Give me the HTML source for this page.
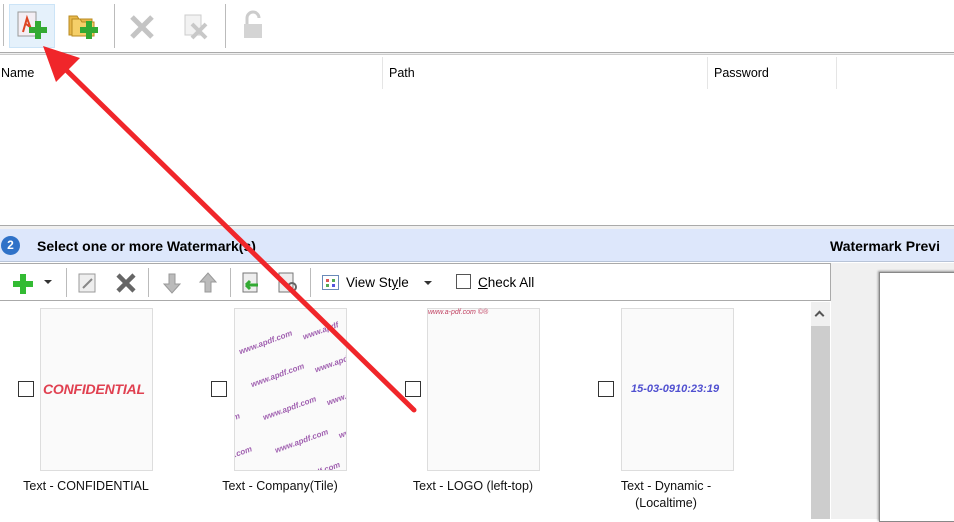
<!DOCTYPE html>
<html><head><meta charset="utf-8"><style>
*{margin:0;padding:0;box-sizing:border-box}
body{width:954px;height:519px;overflow:hidden;background:#fff;font-family:"Liberation Sans","DejaVu Sans",sans-serif;font-size:12.5px;color:#000;position:relative}
.a{position:absolute}
.sep{position:absolute;width:1px;background:#bbb}
.thumb{position:absolute;top:308px;width:113px;height:163px;border:1px solid #ddd;background:#fafafa}
.cb{position:absolute;top:381px;width:16px;height:16px;border:1px solid #333;background:#fff}
.lbl{position:absolute;top:478px;width:200px;text-align:center;font-size:12.5px;line-height:17px;color:#111}
</style></head><body>
<div class="a" style="left:0;top:0;width:954px;height:52px;background:#fff"></div>
<div class="sep" style="left:3px;top:4px;height:42px"></div>
<div class="a" style="left:9px;top:4px;width:46px;height:44px;background:#e5f1fb;border:1px solid #cce4f7"></div>
<svg class="a" style="left:17px;top:10px" width="32" height="32"><rect x="1" y="2" width="18" height="24" fill="#f4eef4" stroke="#999"/><path d="M6 22 L10 8 L15 22 M9 14 L13 17" stroke="#d42" stroke-width="2" fill="none"/><rect x="18" y="11" width="6" height="18" fill="#3a3"/><rect x="12" y="17" width="18" height="6" fill="#3a3"/></svg>
<svg class="a" style="left:68px;top:10px" width="32" height="32"><path d="M1 6h8l2 3h13v16H1z" fill="#e8b84a" stroke="#b88a20"/><path d="M4 9h8l2 3h12v14H4z" fill="#f5cf68" stroke="#b88a20"/><rect x="18" y="11" width="6" height="18" fill="#3a3"/><rect x="12" y="17" width="18" height="6" fill="#3a3"/></svg>
<div class="sep" style="left:114px;top:4px;height:44px"></div>
<svg class="a" style="left:128px;top:14px" width="28" height="26"><path d="M4 3L24 23M24 3L4 23" stroke="#c4c4c4" stroke-width="5"/></svg>
<svg class="a" style="left:182px;top:12px" width="30" height="30"><rect x="3" y="3" width="16" height="20" fill="#f2f2f2" stroke="#ccc"/><path d="M10 12L24 26M24 12L10 26" stroke="#c8c8c8" stroke-width="4"/></svg>
<div class="sep" style="left:225px;top:4px;height:44px"></div>
<svg class="a" style="left:242px;top:10px" width="24" height="30"><path d="M5 14V8a6 6 0 0 1 12 0" stroke="#ccc" stroke-width="3" fill="none"/><rect x="2" y="14" width="18" height="14" fill="#d4d4d4"/></svg>
<div class="a" style="left:0;top:52px;width:954px;height:3px;border-top:1px solid #aaa;border-bottom:1px solid #ccc;background:#eee"></div>
<div class="a" style="left:1px;top:66px">Name</div>
<div class="sep" style="left:382px;top:57px;height:32px;background:#e5e5e5"></div>
<div class="a" style="left:389px;top:66px">Path</div>
<div class="sep" style="left:707px;top:57px;height:32px;background:#e5e5e5"></div>
<div class="a" style="left:714px;top:66px">Password</div>
<div class="sep" style="left:836px;top:57px;height:32px;background:#e5e5e5"></div>
<div class="a" style="left:0;top:225px;width:954px;height:4px;border-top:1px solid #aaa;background:#f0f0f0"></div>
<div class="a" style="left:0;top:229px;width:954px;height:33px;background:#dde7fb;border-bottom:1px solid #b8c4d8"></div>
<div class="a" style="left:1px;top:236px;width:19px;height:19px;border-radius:50%;background:#2f72c8;color:#fff;font-weight:bold;font-size:12px;text-align:center;line-height:19px">2</div>
<div class="a" style="left:37px;top:238px;font-weight:bold;font-size:14px">Select one or more Watermark(s)</div>
<div class="a" style="left:830px;top:238px;font-weight:bold;font-size:14px;white-space:nowrap">Watermark Previ</div>
<div class="a" style="left:831px;top:263px;width:123px;height:256px;background:#f0f0f0"></div>
<div class="a" style="left:879px;top:272px;width:80px;height:250px;background:#fff;border:1px solid #888;box-shadow:-1px -1px 2px #999"></div>
<div class="a" style="left:0;top:263px;width:831px;height:38px;background:#fff;border:1px solid #aaa;border-left:none"></div>
<svg class="a" style="left:12px;top:273px" width="22" height="22"><rect x="8" y="1" width="6" height="20" fill="#3b3"/><rect x="1" y="8" width="20" height="6" fill="#3b3"/></svg>
<div class="a" style="left:44px;top:280px;border:4px solid transparent;border-top:4px solid #333"></div>
<div class="sep" style="left:66px;top:268px;height:29px"></div>
<svg class="a" style="left:77px;top:272px" width="22" height="22"><rect x="2" y="2" width="16" height="18" fill="#eee" stroke="#999"/><path d="M6 16L15 7" stroke="#888" stroke-width="2"/></svg>
<svg class="a" style="left:115px;top:272px" width="22" height="22"><path d="M3 3L19 19M19 3L3 19" stroke="#666" stroke-width="4.5"/></svg>
<div class="sep" style="left:148px;top:268px;height:29px"></div>
<svg class="a" style="left:162px;top:272px" width="20" height="22"><path d="M7 2h6v10h5l-8 9-8-9h5z" fill="#bbb" stroke="#999"/></svg>
<svg class="a" style="left:198px;top:272px" width="20" height="22"><path d="M7 20h6V10h5L10 1 2 10h5z" fill="#bbb" stroke="#999"/></svg>
<div class="sep" style="left:230px;top:268px;height:29px"></div>
<svg class="a" style="left:240px;top:271px" width="24" height="24"><rect x="3" y="2" width="14" height="19" fill="#eee" stroke="#777"/><path d="M6 14h12M6 14l4-4M6 14l4 4" stroke="#3a3" stroke-width="3"/></svg>
<svg class="a" style="left:276px;top:271px" width="24" height="24"><rect x="3" y="2" width="14" height="19" fill="#eee" stroke="#777"/><circle cx="16" cy="16" r="4" fill="none" stroke="#666" stroke-width="2"/></svg>
<div class="sep" style="left:310px;top:268px;height:29px"></div>
<div class="a" style="left:322px;top:275px;width:17px;height:15px;border:1px solid #6a8ab8;background:#fff"></div>
<div class="a" style="left:326px;top:279px;width:3px;height:3px;background:#d55"></div><div class="a" style="left:332px;top:279px;width:3px;height:3px;background:#5a5"></div>
<div class="a" style="left:326px;top:284px;width:3px;height:3px;background:#5a5"></div><div class="a" style="left:332px;top:284px;width:3px;height:3px;background:#55d"></div>
<div class="a" style="left:346px;top:275px;font-size:13.5px">View St<u>y</u>le</div>
<div class="a" style="left:424px;top:281px;border:4px solid transparent;border-top:4px solid #333"></div>
<div class="a" style="left:456px;top:274px;width:15px;height:15px;border:1px solid #555;background:#fff"></div>
<div class="a" style="left:478px;top:275px;font-size:13.5px"><u>C</u>heck All</div>
<div class="a" style="left:811px;top:302px;width:19px;height:217px;background:#f0f0f0"></div>
<div class="a" style="left:816px;top:312px;width:7px;height:7px;border-left:2px solid #555;border-top:2px solid #555;transform:rotate(45deg)"></div>
<div class="a" style="left:811px;top:326px;width:19px;height:193px;background:#cdcdcd"></div>
<div class="cb" style="left:18px"></div>
<div class="thumb" style="left:40px"><div class="a" style="left:2px;top:72px;color:#e04050;font-weight:bold;font-style:italic;font-size:14px;letter-spacing:-0.2px">CONFIDENTIAL</div></div>
<div class="lbl" style="left:-14px">Text - CONFIDENTIAL</div>
<div class="cb" style="left:211px"></div>
<div class="thumb" style="left:234px;overflow:hidden">
<svg width="113" height="163" style="font-size:8px;font-weight:bold;font-style:italic" fill="#a060b0"><g transform="rotate(-20 56 80)">
<text x="-20" y="20">.com</text><text x="20" y="30">www.apdf.com</text><text x="85" y="38">www.apdf</text>
<text x="-20" y="55">.com</text><text x="20" y="65">www.apdf.com</text><text x="85" y="73">www.apdf</text>
<text x="-20" y="90">.com</text><text x="20" y="100">www.apdf.com</text><text x="85" y="108">www.apdf</text>
<text x="-20" y="125">.com</text><text x="20" y="135">www.apdf.com</text><text x="85" y="143">www.apdf</text>
<text x="-20" y="160">.com</text><text x="20" y="170">www.apdf.com</text><text x="85" y="178">www.apdf</text>
</g></svg></div>
<div class="lbl" style="left:180px">Text - Company(Tile)</div>
<div class="cb" style="left:405px"></div>
<div class="thumb" style="left:427px"><div class="a" style="left:0;top:0;color:#c04060;font-style:italic;font-size:7px">www.a-pdf.com ©®</div></div>
<div class="lbl" style="left:373px">Text - LOGO (left-top)</div>
<div class="cb" style="left:598px"></div>
<div class="thumb" style="left:621px"><div class="a" style="left:9px;top:74px;color:#5050d0;font-weight:bold;font-style:italic;font-size:11px">15-03-0910:23:19</div></div>
<div class="lbl" style="left:566px">Text - Dynamic -<br>(Localtime)</div>
<svg class="a" style="left:0;top:0" width="954" height="519"><path d="M414 410 L60 64" stroke="#f0262a" stroke-width="5" stroke-linecap="round"/><path d="M43 46 L80 58 L56 82 Z" fill="#f0262a"/></svg>
</body></html>
